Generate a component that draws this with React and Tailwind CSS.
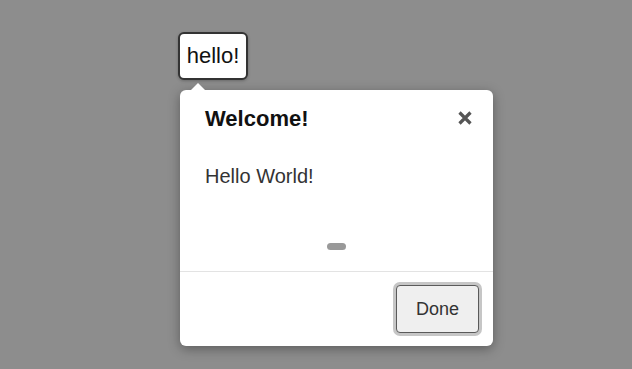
export default function App() {
  return (
    <div
      className="w-[632px] h-[369px] bg-[#8d8d8d] overflow-hidden flex flex-col items-start pl-[178px] pt-[32px]"
      style={{ fontFamily: '"Liberation Sans", Arial, sans-serif' }}
    >
      <div className="w-[70px] h-[48px] bg-white border-2 border-[#333333] rounded-[6px] flex items-center justify-center text-[22px] leading-[26px] text-[#111111] shadow-[0_1px_3px_rgba(0,0,0,0.25)]">
        hello!
      </div>
      <div className="relative ml-[2px] mt-[10px] w-[313px] h-[256px] bg-white rounded-[6px] shadow-[0_3px_12px_rgba(0,0,0,0.35)] flex flex-col">
        <div className="absolute left-[10px] top-[-7px] w-0 h-0 border-l-[8px] border-r-[8px] border-b-[8px] border-l-transparent border-r-transparent border-b-white" />
        <div className="flex items-center justify-between pl-[25px] pr-[21px] pt-[16px]">
          <div className="text-[22px] leading-[26px] font-bold text-[#111111]">Welcome!</div>
          <svg width="14" height="14" viewBox="0 0 14 14" className="mb-[2px]">
            <path d="M1.5 1.5 L12.5 12.5 M12.5 1.5 L1.5 12.5" stroke="#555555" strokeWidth="3.2" strokeLinecap="butt" />
          </svg>
        </div>
        <div className="pl-[25px] mt-[32px] text-[20px] leading-[24px] text-[#333333]">Hello World!</div>
        <div className="flex justify-center mt-[55px]">
          <div className="w-[19px] h-[7px] rounded-full bg-[#999999]" />
        </div>
        <div className="mt-[21px] border-t border-[#e3e3e3] flex-1 flex items-center justify-end pr-[14px]">
          <div className="w-[83px] h-[48px] flex items-center justify-center bg-[#efefef] border border-[#5a5a5a] rounded-[4px] shadow-[0_0_0_3px_#c6c6c6] text-[18px] text-[#333333]">
            Done
          </div>
        </div>
      </div>
    </div>
  );
}
